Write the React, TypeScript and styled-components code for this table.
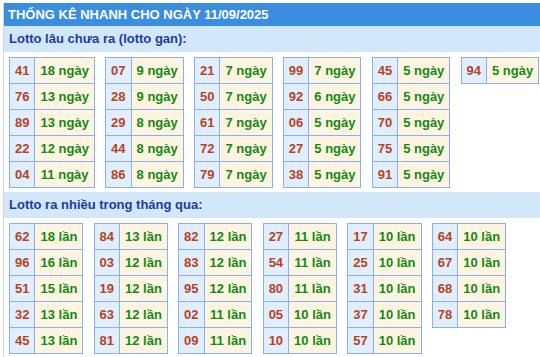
import React from 'react';
import styled, { createGlobalStyle } from 'styled-components';

type Item = { num: string; count: number };

const ganData: Item[][] = [
  [
    { num: '41', count: 18 },
    { num: '76', count: 13 },
    { num: '89', count: 13 },
    { num: '22', count: 12 },
    { num: '04', count: 11 },
  ],
  [
    { num: '07', count: 9 },
    { num: '28', count: 9 },
    { num: '29', count: 8 },
    { num: '44', count: 8 },
    { num: '86', count: 8 },
  ],
  [
    { num: '21', count: 7 },
    { num: '50', count: 7 },
    { num: '61', count: 7 },
    { num: '72', count: 7 },
    { num: '79', count: 7 },
  ],
  [
    { num: '99', count: 7 },
    { num: '92', count: 6 },
    { num: '06', count: 5 },
    { num: '27', count: 5 },
    { num: '38', count: 5 },
  ],
  [
    { num: '45', count: 5 },
    { num: '66', count: 5 },
    { num: '70', count: 5 },
    { num: '75', count: 5 },
    { num: '91', count: 5 },
  ],
  [{ num: '94', count: 5 }],
];

const frequentData: Item[][] = [
  [
    { num: '62', count: 18 },
    { num: '96', count: 16 },
    { num: '51', count: 15 },
    { num: '32', count: 13 },
    { num: '45', count: 13 },
  ],
  [
    { num: '84', count: 13 },
    { num: '03', count: 12 },
    { num: '19', count: 12 },
    { num: '63', count: 12 },
    { num: '81', count: 12 },
  ],
  [
    { num: '82', count: 12 },
    { num: '83', count: 12 },
    { num: '95', count: 12 },
    { num: '02', count: 11 },
    { num: '09', count: 11 },
  ],
  [
    { num: '27', count: 11 },
    { num: '54', count: 11 },
    { num: '80', count: 11 },
    { num: '05', count: 10 },
    { num: '10', count: 10 },
  ],
  [
    { num: '17', count: 10 },
    { num: '25', count: 10 },
    { num: '31', count: 10 },
    { num: '37', count: 10 },
    { num: '57', count: 10 },
  ],
  [
    { num: '64', count: 10 },
    { num: '67', count: 10 },
    { num: '68', count: 10 },
    { num: '78', count: 10 },
  ],
];

const GlobalStyle = createGlobalStyle`
  body {
    margin: 0;
    background: #fff;
    font-family: "Liberation Sans", Arial, sans-serif;
  }
`;

const Wrapper = styled.div`
  margin: 3px 0 0 3px;
  border-left: 1px solid #d6d6d6;
`;

const Title = styled.div`
  background: #3b8de0;
  color: #fff;
  font-size: 13px;
  font-weight: bold;
  height: 23px;
  line-height: 23px;
  padding-left: 4px;
  white-space: nowrap;
`;

const SectionTitle = styled.div`
  background: #d3e7fb;
  color: #1b3d9f;
  font-size: 13px;
  font-weight: bold;
  height: 26px;
  line-height: 26px;
  padding-left: 5px;
`;

const Grid = styled.div`
  display: flex;
  flex-wrap: wrap;
  align-items: flex-start;
  column-gap: 10.2px;
  padding: 5px 0 4px 5px;
`;

const Table = styled.table`
  border-collapse: collapse;
`;

const Cell = styled.td<{ $kind: 'num' | 'value' }>`
  border: 1px solid #8aaff0;
  height: 25px;
  padding: 0 5px;
  text-align: center;
  font-size: 13px;
  font-weight: bold;
  white-space: nowrap;
  background: ${(p) => (p.$kind === 'num' ? '#e1eefd' : '#fef4e2')};
  color: ${(p) => (p.$kind === 'num' ? '#b8421f' : '#138a13')};
`;

const StatTable = ({ items, unit }: { items: Item[]; unit: string }) => (
  <Table>
    <tbody>
      {items.map((it) => (
        <tr key={it.num}>
          <Cell $kind='num'>{it.num}</Cell>
          <Cell $kind='value'>
            {it.count} {unit}
          </Cell>
        </tr>
      ))}
    </tbody>
  </Table>
);

const App = () => {
  return (
    <>
      <GlobalStyle />
      <Wrapper>
        <Title>THỐNG KÊ NHANH CHO NGÀY 11/09/2025</Title>
        <SectionTitle>Lotto lâu chưa ra (lotto gan):</SectionTitle>
        <Grid>
          {ganData.map((col, i) => (
            <StatTable key={i} items={col} unit='ngày' />
          ))}
        </Grid>
        <SectionTitle>Lotto ra nhiều trong tháng qua:</SectionTitle>
        <Grid>
          {frequentData.map((col, i) => (
            <StatTable key={i} items={col} unit='lần' />
          ))}
        </Grid>
      </Wrapper>
    </>
  );
};

export default App;
